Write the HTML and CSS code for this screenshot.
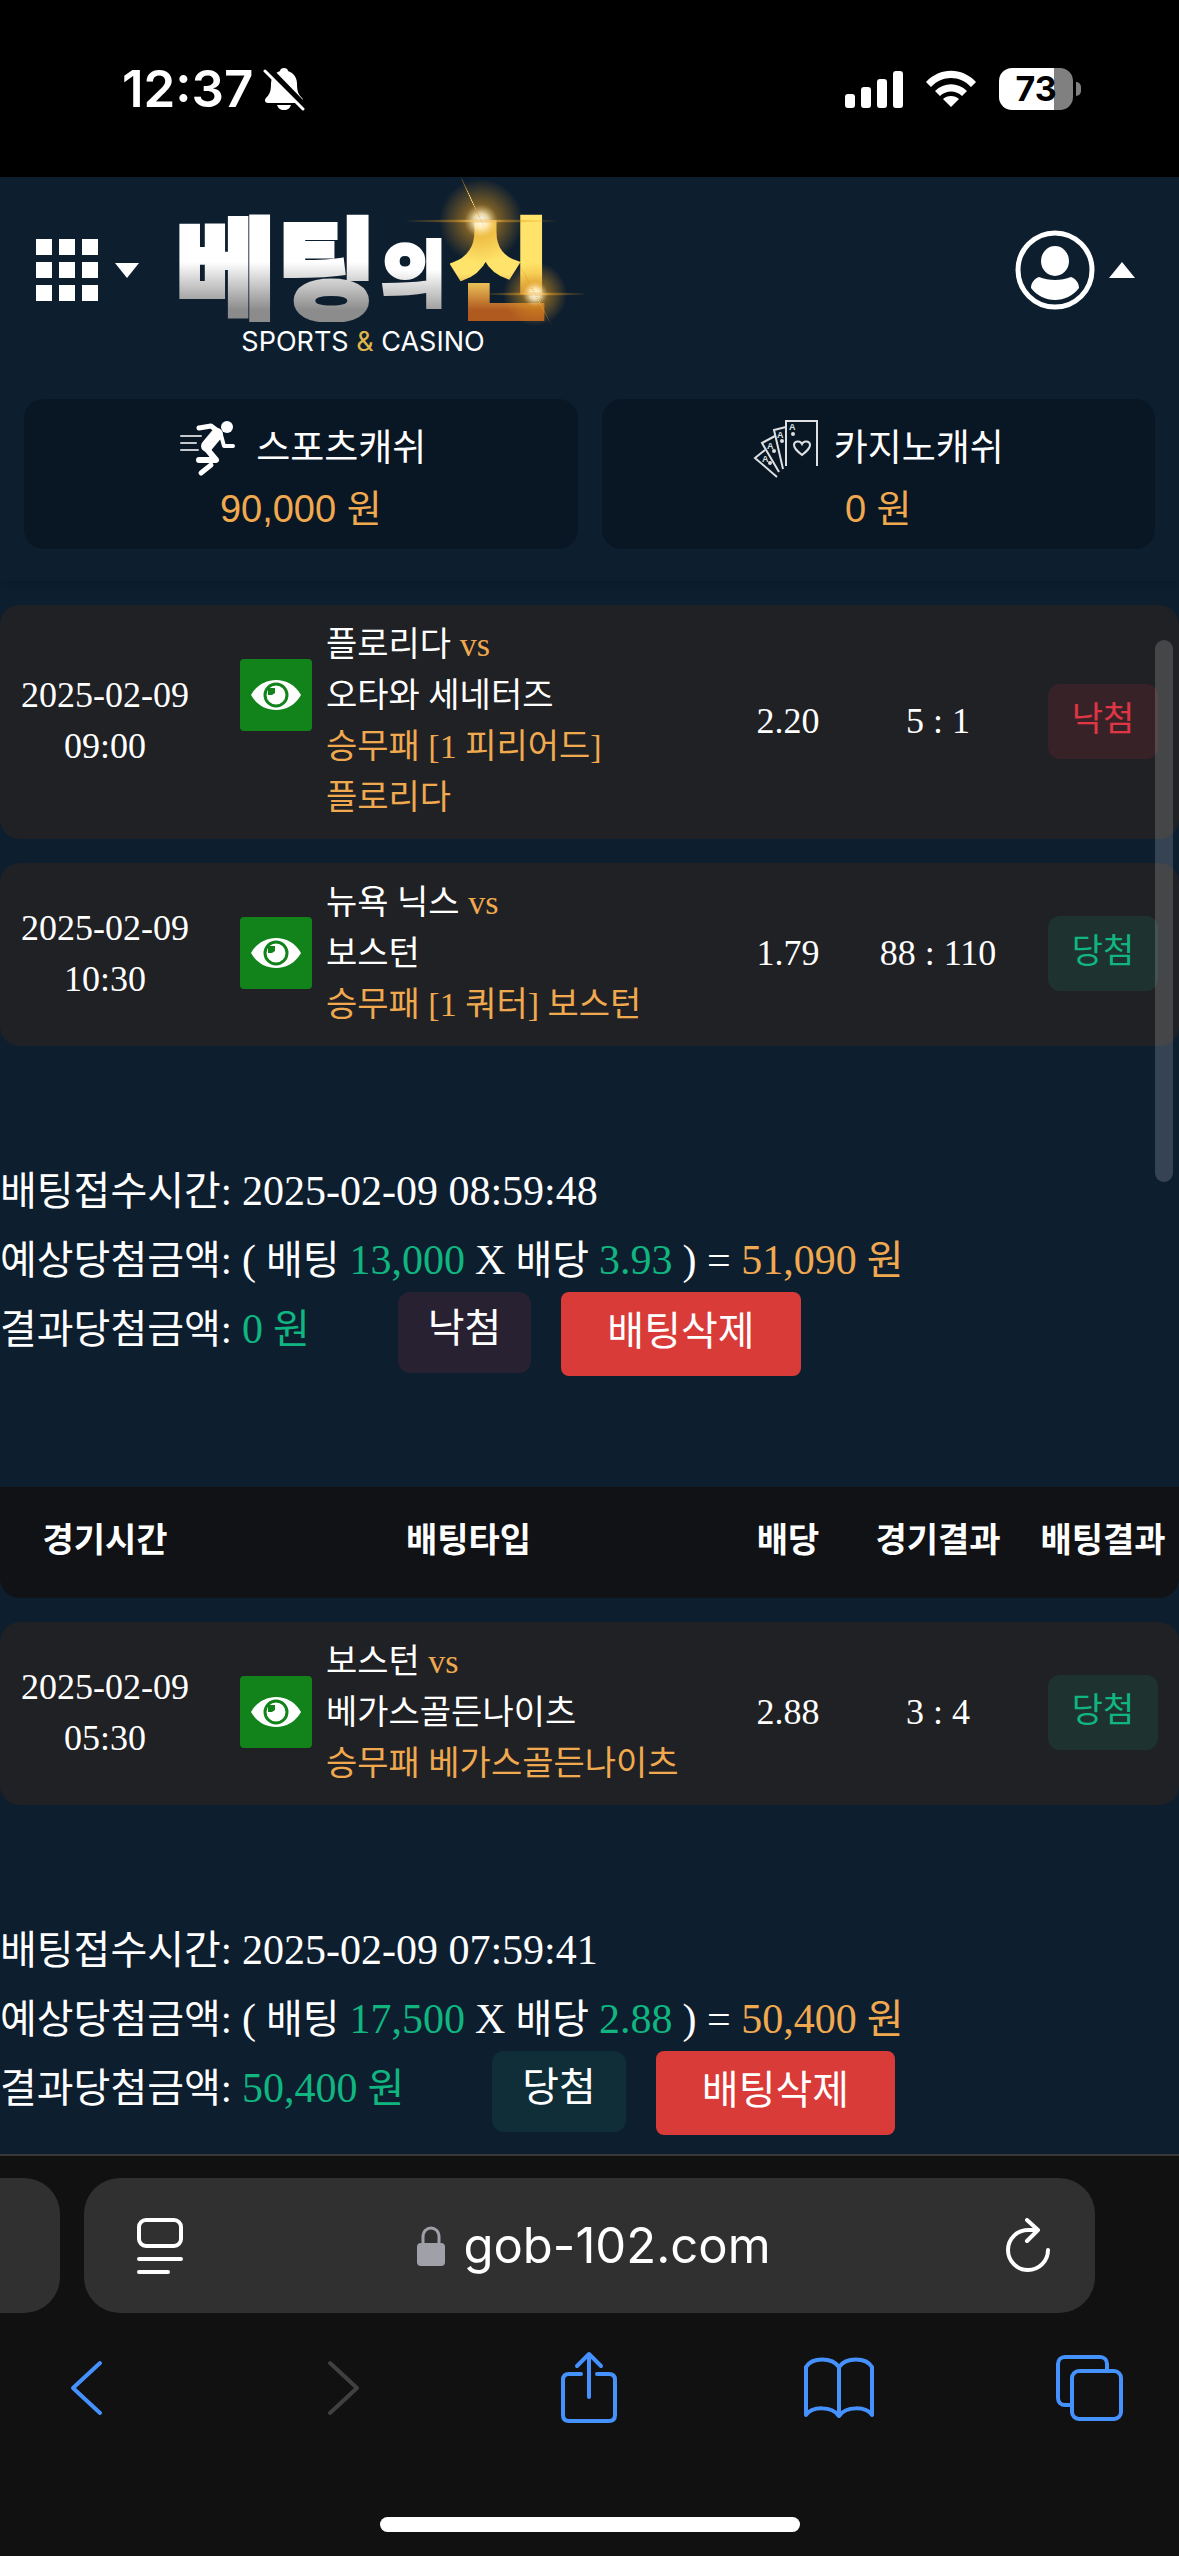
FILE: index.html
```html
<!DOCTYPE html>
<html lang="ko">
<head>
    <meta charset="UTF-8">
    <meta name="viewport" content="width=device-width, initial-scale=1.0">
    <title>베팅의신</title>
    <link rel="stylesheet" href="styles.css">
</head>
<body>
    <div class="status-bar">
        <div class="status-left">
            <span class="clock">12:37</span>
            <svg width="42" height="44" viewBox="0 0 42 44">
                <path d="M21 1c2 0 4 1 4 3 6 2 9 7 9 13 0 8 2 11 5 14 2 2 1 5-2 5H5c-3 0-4-3-2-5 3-3 5-6 5-14C8 11 11 6 17 4c0-2 2-3 4-3z" fill="#fff"/>
                <path d="M14 38h14c-1 3-3 5-7 5s-6-2-7-5z" fill="#fff"/>
                <path d="M4 1l39 40" stroke="#000" stroke-width="7"/>
                <path d="M2 4l38 38" stroke="#fff" stroke-width="3" stroke-linecap="round"/>
            </svg>
        </div>
        <div class="status-right">
            <svg width="58" height="38" viewBox="0 0 58 38" fill="#fff">
                <rect x="0" y="24" width="10" height="14" rx="3"/>
                <rect x="16" y="17" width="10" height="21" rx="3"/>
                <rect x="32" y="9" width="10" height="29" rx="3"/>
                <rect x="48" y="1" width="10" height="37" rx="3"/>
            </svg>
            <svg width="52" height="38" viewBox="0 0 52 38" fill="#fff">
                <path d="M26 37l-8-8c4-4 12-4 16 0z"/>
                <path d="M10 21C19 12 33 12 42 21l-5 5c-6-6-16-6-22 0z"/>
                <path d="M1 12C15-3 37-3 51 12l-5 5C35 5 17 5 6 17z"/>
            </svg>
            <div class="battery">73</div>
        </div>
    </div>

    <header>
        <div class="top">
            <button class="icon-btn" aria-label="메뉴">
                <svg width="62" height="62" viewBox="0 0 62 62" fill="#fff">
                    <rect x="0" y="0" width="16" height="16"/><rect x="23" y="0" width="16" height="16"/><rect x="46" y="0" width="16" height="16"/>
                    <rect x="0" y="23" width="16" height="16"/><rect x="23" y="23" width="16" height="16"/><rect x="46" y="23" width="16" height="16"/>
                    <rect x="0" y="46" width="16" height="16"/><rect x="23" y="46" width="16" height="16"/><rect x="46" y="46" width="16" height="16"/>
                </svg>
                <svg width="24" height="15" viewBox="0 0 24 15"><path d="M0 0h24L12 15z" fill="#fff"/></svg>
            </button>
            <a class="logo" href="#">
                <span class="logo-name"><span class="silver">베팅</span><span class="silver small">의</span><span class="gold">신</span></span>
                <span class="tagline">SPORTS <b>&amp;</b> CASINO</span>
                <svg class="flare" width="220" height="160" viewBox="0 0 220 160">
                    <defs>
                        <radialGradient id="glow">
                            <stop offset="0" stop-color="#fff"/>
                            <stop offset="0.18" stop-color="#ffe9b0" stop-opacity="0.9"/>
                            <stop offset="0.4" stop-color="#e09a20" stop-opacity="0.5"/>
                            <stop offset="1" stop-color="#e09a20" stop-opacity="0"/>
                        </radialGradient>
                    </defs>
                    <circle cx="92" cy="42" r="42" fill="url(#glow)"/>
                    <ellipse cx="92" cy="42" rx="80" ry="2" fill="url(#glow)"/>
                    <ellipse cx="82" cy="20" rx="36" ry="1" fill="url(#glow)" transform="rotate(65 82 20)"/>
                    <circle cx="146" cy="115" r="32" fill="url(#glow)"/>
                    <ellipse cx="146" cy="115" rx="54" ry="2" fill="url(#glow)"/>
                    <ellipse cx="146" cy="115" rx="40" ry="1" fill="url(#glow)" transform="rotate(62 146 115)"/>
                </svg>
            </a>
            <button class="icon-btn user" aria-label="내 정보">
                <svg width="80" height="80" viewBox="0 0 80 80">
                    <circle cx="40" cy="40" r="37" fill="none" stroke="#fff" stroke-width="5"/>
                    <ellipse cx="40" cy="31" rx="14" ry="15" fill="#fff"/>
                    <path d="M24 47c10 4 22 4 32 0 5 2 8 6 8 11C52 74 28 74 16 58c0-5 3-9 8-11z" fill="#fff"/>
                </svg>
                <svg width="26" height="16" viewBox="0 0 26 16"><path d="M0 16h26L13 0z" fill="#fff"/></svg>
            </button>
        </div>
        <div class="cash">
            <div class="cash-card">
                <div class="cash-label">
                    <svg width="66" height="60" viewBox="0 0 66 60" fill="none" stroke="#fff" stroke-linecap="round" stroke-linejoin="round">
                        <circle cx="52" cy="8" r="6" fill="#fff" stroke="none"/>
                        <path d="M24 9l12-2 8 6" stroke-width="5"/>
                        <path d="M42 15L32 27" stroke-width="12"/>
                        <path d="M46 16l3 11h9" stroke-width="4"/>
                        <path d="M31 29l10 12H24" stroke-width="6"/>
                        <path d="M36 46L26 54" stroke-width="5"/>
                        <path d="M6 17h20M6 24h15M6 31h17" stroke="#c4c8cc" stroke-width="2"/>
                    </svg>
                    <span>스포츠캐쉬</span>
                </div>
                <div class="cash-amount">90,000 원</div>
            </div>
            <div class="cash-card">
                <div class="cash-label">
                    <svg width="66" height="60" viewBox="0 0 66 60" fill="none" stroke="#dde0e3" stroke-width="2">
                        <path d="M33 47V2h31v45"/>
                        <path d="M33 8l-12 3 9 39"/>
                        <path d="M22 17l-13 7 17 29"/>
                        <path d="M12 31L2 39l22 19"/>
                        <path d="M49 36c-6-5-8-7-8-10 0-4 6-5 8-1 2-4 8-3 8 1 0 3-2 5-8 10z"/>
                        <g fill="#dde0e3" stroke="none" class="ace">
                            <text x="36" y="11">A</text><circle cx="40" cy="15" r="2"/>
                            <text x="24" y="19">A</text><circle cx="29" cy="22" r="2"/>
                            <text x="14" y="30">A</text><circle cx="21" cy="32" r="2"/>
                            <text x="9" y="43">A</text><circle cx="17" cy="44" r="2"/>
                        </g>
                    </svg>
                    <span>카지노캐쉬</span>
                </div>
                <div class="cash-amount">0 원</div>
            </div>
        </div>
    </header>

    <main>
        <table class="bets">
            <colgroup><col class="c-time"><col class="c-type"><col class="c-odds"><col class="c-score"><col class="c-result"></colgroup>
            <tbody>
                <tr>
                    <td>2025-02-09<br>09:00</td>
                    <td>
                        <div class="match">
                            <button class="eye" aria-label="보기"><svg width="52" height="32" viewBox="0 0 52 32"><path d="M1 16C12-4 40-4 51 16 40 36 12 36 1 16z" fill="#fff"/><circle cx="26" cy="16" r="11" fill="none" stroke="#12831a" stroke-width="3"/><path d="M18 9h7v5l-3 2h-4z" fill="#12831a"/></svg></button>
                            <div>플로리다 <span class="pick">vs</span><br>오타와 세네터즈<br><span class="pick">승무패 [1 피리어드] 플로리다</span></div>
                        </div>
                    </td>
                    <td>2.20</td>
                    <td>5 : 1</td>
                    <td><span class="badge lose">낙첨</span></td>
                </tr>
                <tr>
                    <td>2025-02-09<br>10:30</td>
                    <td>
                        <div class="match">
                            <button class="eye" aria-label="보기"><svg width="52" height="32" viewBox="0 0 52 32"><path d="M1 16C12-4 40-4 51 16 40 36 12 36 1 16z" fill="#fff"/><circle cx="26" cy="16" r="11" fill="none" stroke="#12831a" stroke-width="3"/><path d="M18 9h7v5l-3 2h-4z" fill="#12831a"/></svg></button>
                            <div>뉴욕 닉스 <span class="pick">vs</span><br>보스턴<br><span class="pick">승무패 [1 쿼터] 보스턴</span></div>
                        </div>
                    </td>
                    <td>1.79</td>
                    <td>88 : 110</td>
                    <td><span class="badge win">당첨</span></td>
                </tr>
            </tbody>
        </table>

        <div class="summary">
            <div>배팅접수시간: <span class="num">2025-02-09 08:59:48</span></div>
            <div>예상당첨금액: <span class="num">(</span> 배팅 <span class="num green">13,000</span> <span class="num">X</span> 배당 <span class="num green">3.93</span> <span class="num">) = <span class="pick">51,090</span></span> <span class="pick">원</span></div>
            <div class="summary-result">
                <span>결과당첨금액: <span class="green"><span class="num">0</span> 원</span></span>
                <span class="tag tag-lose">낙첨</span>
                <button class="delete">배팅삭제</button>
            </div>
        </div>

        <table class="bets">
            <colgroup><col class="c-time"><col class="c-type"><col class="c-odds"><col class="c-score"><col class="c-result"></colgroup>
            <thead>
                <tr>
                    <th>경기시간</th>
                    <th>배팅타입</th>
                    <th>배당</th>
                    <th>경기결과</th>
                    <th>배팅결과</th>
                </tr>
            </thead>
            <tbody>
                <tr>
                    <td>2025-02-09<br>05:30</td>
                    <td>
                        <div class="match">
                            <button class="eye" aria-label="보기"><svg width="52" height="32" viewBox="0 0 52 32"><path d="M1 16C12-4 40-4 51 16 40 36 12 36 1 16z" fill="#fff"/><circle cx="26" cy="16" r="11" fill="none" stroke="#12831a" stroke-width="3"/><path d="M18 9h7v5l-3 2h-4z" fill="#12831a"/></svg></button>
                            <div>보스턴 <span class="pick">vs</span><br>베가스골든나이츠<br><span class="pick">승무패 베가스골든나이츠</span></div>
                        </div>
                    </td>
                    <td>2.88</td>
                    <td>3 : 4</td>
                    <td><span class="badge win">당첨</span></td>
                </tr>
            </tbody>
        </table>

        <div class="summary">
            <div>배팅접수시간: <span class="num">2025-02-09 07:59:41</span></div>
            <div>예상당첨금액: <span class="num">(</span> 배팅 <span class="num green">17,500</span> <span class="num">X</span> 배당 <span class="num green">2.88</span> <span class="num">) = <span class="pick">50,400</span></span> <span class="pick">원</span></div>
            <div class="summary-result">
                <span>결과당첨금액: <span class="green"><span class="num">50,400</span> 원</span></span>
                <span class="tag tag-win">당첨</span>
                <button class="delete">배팅삭제</button>
            </div>
        </div>

        <div class="scrollbar"></div>
    </main>

    <footer>
        <div class="tabs">
            <div class="tab-prev"></div>
            <div class="address">
                <button aria-label="페이지 메뉴">
                    <svg width="46" height="56" viewBox="0 0 46 56" fill="none" stroke="#fff" stroke-width="4" stroke-linecap="round">
                        <rect x="2" y="2" width="42" height="26" rx="7"/><path d="M2 41h42M2 54h29"/>
                    </svg>
                </button>
                <button class="url">
                    <svg width="28" height="40" viewBox="0 0 28 40">
                        <rect x="0" y="17" width="28" height="23" rx="4" fill="#a0a0a8"/>
                        <path d="M6 19V11c0-12 16-12 16 0v8" fill="none" stroke="#a0a0a8" stroke-width="3"/>
                    </svg>
                    <span>gob-102.com</span>
                </button>
                <button aria-label="새로고침">
                    <svg width="46" height="56" viewBox="0 0 46 56" fill="none" stroke="#fff" stroke-width="4" stroke-linecap="round" stroke-linejoin="round">
                        <path d="M43 32A20 20 0 1 1 23 12h9"/><path d="M22 2l11 10-11 11"/>
                    </svg>
                </button>
            </div>
        </div>
        <nav>
            <button aria-label="뒤로"><svg width="72" height="76" viewBox="0 0 72 76"><path d="M50 14L23 39l27 25"/></svg></button>
            <button aria-label="앞으로" class="off"><svg width="72" height="76" viewBox="0 0 72 76"><path d="M29 14l27 25-27 25"/></svg></button>
            <button aria-label="공유"><svg width="72" height="76" viewBox="0 0 72 76"><path d="M29 25H17c-4 0-6 2-6 6v35c0 4 2 6 6 6h40c4 0 6-2 6-6V31c0-4-2-6-6-6H45M37 48V5M25 17L37 5l12 12"/></svg></button>
            <button aria-label="책갈피"><svg width="72" height="76" viewBox="0 0 72 76"><path d="M37 18C30 8 10 8 4 18v48c6-9 26-9 33 1 7-10 27-10 33-1V18C64 8 44 8 37 18zM37 18v48"/></svg></button>
            <button aria-label="탭"><svg width="72" height="76" viewBox="0 0 72 76"><rect x="19" y="22" width="49" height="48" rx="7"/><path d="M19 56h-7c-4 0-7-3-7-7V15c0-4 3-7 7-7h35c4 0 7 3 7 7v7"/></svg></button>
        </nav>
        <div class="home-bar"></div>
    </footer>
</body>
</html>
```

FILE: styles.css
```css
* {
    box-sizing: border-box;
}
body {
    margin: 0;
    min-height: 100vh;
    display: flex;
    flex-direction: column;
    background-color: #0d1e2f;
    color: #fff;
    font-family: "Liberation Serif", "Noto Sans CJK KR", serif;
    word-break: keep-all;
}
button {
    background: none;
    border: 0;
    padding: 0;
    color: inherit;
    font-family: inherit;
}
svg {
    display: block;
    flex-shrink: 0;
}

/* status bar */
.status-bar {
    height: 177px;
    background: #000;
    display: flex;
    align-items: center;
    justify-content: space-between;
    padding: 0 106px 0 122px;
    font-family: Inter, sans-serif;
}
.status-left,
.status-right {
    display: flex;
    align-items: center;
}
.status-left {
    gap: 10px;
}
.status-right {
    gap: 22px;
}
.clock {
    font-size: 51px;
    font-weight: 600;
}
.battery {
    position: relative;
    width: 74px;
    height: 42px;
    line-height: 42px;
    border-radius: 13px;
    background: linear-gradient(to right, #fff 74%, #808080 74%);
    color: #000;
    font-size: 34px;
    font-weight: 700;
    text-align: center;
}
.battery::after {
    content: "";
    position: absolute;
    right: -8px;
    top: 14px;
    width: 5px;
    height: 14px;
    border-radius: 0 5px 5px 0;
    background: #808080;
}

/* header */
header {
    padding: 36px 24px 32px;
    box-shadow: 0 3px 6px rgba(0,0,0,0.12);
}
.top {
    display: flex;
    align-items: flex-start;
    min-height: 186px;
    padding: 0 20px 0 12px;
}
.icon-btn {
    height: 114px;
    display: flex;
    align-items: center;
    gap: 17px;
}
.user {
    margin-left: auto;
    gap: 14px;
}
.logo {
    position: relative;
    margin-left: 36px;
    display: flex;
    flex-direction: column;
    align-items: center;
    color: #fff;
    text-decoration: none;
}
.logo-name {
    display: flex;
    align-items: center;
    gap: 4px;
    height: 112px;
    padding-bottom: 14px;
    line-height: 120px;
    font-family: "Noto Sans CJK KR", sans-serif;
    font-size: 110px;
    font-weight: 900;
}
.silver {
    background: linear-gradient(#fff 50%, #8c8c8c 90%);
    -webkit-background-clip: text;
    background-clip: text;
    color: transparent;
    -webkit-text-stroke: 4px transparent;
}
.small {
    margin-top: 16px;
    font-size: 70px;
}
.gold {
    background: linear-gradient(#ffe36a 60%, #b05a20 90%);
    -webkit-background-clip: text;
    background-clip: text;
    color: transparent;
    -webkit-text-stroke: 4px transparent;
}
.tagline {
    font-family: Inter, sans-serif;
    font-size: 27px;
    line-height: 34px;
}
.tagline b {
    color: #e0b64c;
    font-weight: 400;
}
.flare {
    position: absolute;
    left: 214px;
    top: -34px;
    pointer-events: none;
}
.cash {
    display: flex;
    gap: 24px;
}
.cash-card {
    flex: 1;
    padding: 18px 0 12px;
    border-radius: 20px;
    background: #091624;
    text-align: center;
}
.cash-label {
    display: flex;
    align-items: center;
    justify-content: center;
    gap: 15px;
    font-size: 37px;
    line-height: 64px;
}
.cash-amount {
    color: #f0a94f;
    font-family: "Liberation Sans", "Noto Sans CJK KR", sans-serif;
    font-size: 38px;
    line-height: 56px;
}
.ace {
    font-family: "Liberation Sans", sans-serif;
    font-size: 9px;
    font-weight: 700;
}

/* bets */
main {
    position: relative;
    flex: 1;
}
.bets {
    width: 100%;
    table-layout: fixed;
    border-collapse: separate;
    border-spacing: 0 24px;
    font-size: 36px;
    line-height: 51px;
    text-align: center;
}
.c-time { width: 210px; }
.c-odds { width: 122px; }
.c-score { width: 178px; }
.c-result { width: 152px; }
.bets th {
    padding: 28px 0 32px;
    background: #111215;
    font-size: 34px;
    font-weight: 700;
}
.bets td {
    padding: 14px 0 16px;
    background: #202124;
}
.bets th:first-child {
    border-radius: 0 0 0 20px;
}
.bets th:last-child {
    border-radius: 0 0 20px 0;
}
.bets td:first-child {
    border-radius: 20px 0 0 20px;
}
.bets td:last-child {
    border-radius: 0 20px 20px 0;
}
.match {
    display: flex;
    align-items: flex-start;
    gap: 14px;
    padding: 0 10px 0 30px;
    font-size: 34px;
    text-align: left;
}
.eye {
    flex-shrink: 0;
    width: 72px;
    height: 72px;
    margin-top: 40px;
    display: flex;
    align-items: center;
    justify-content: center;
    border-radius: 4px;
    background: #12831a;
}
.pick {
    color: #f0a94f;
}
.green {
    color: #10b580;
}
.badge {
    display: inline-block;
    width: 110px;
    height: 75px;
    line-height: 71px;
    border-radius: 12px;
    font-size: 34px;
    vertical-align: middle;
}
.win {
    background: #1e322f;
    color: #10b580;
}
.lose {
    background: #372327;
    color: #e03545;
}

/* bet summary */
.summary {
    margin-top: 87px;
    font-size: 40px;
    line-height: 69px;
}
.summary + .bets {
    margin-top: 87px;
}
.num {
    font-size: 42px;
}
.summary-result {
    display: flex;
    align-items: flex-start;
}
.tag,
.delete {
    margin-top: -3px;
    border-radius: 12px;
}
.tag {
    margin-left: 88px;
    margin-right: 30px;
    padding: 2px 30px 10px;
}
.tag-lose {
    background: #282132;
}
.tag-win {
    background: #0f2e38;
}
.delete {
    height: 84px;
    padding: 0 46px 12px;
    border-radius: 8px;
    background: #d93b38;
    font-size: 40px;
}
.scrollbar {
    position: absolute;
    right: 6px;
    top: 59px;
    width: 18px;
    height: 542px;
    border-radius: 9px;
    background: rgba(255,255,255,0.17);
}

/* browser toolbar */
footer {
    border-top: 2px solid #38383a;
    background: #111;
    padding: 22px 0 24px;
}
.tabs {
    display: flex;
    gap: 24px;
    padding-right: 84px;
}
.tab-prev {
    width: 60px;
    border-radius: 0 36px 36px 0;
    background: #303030;
}
.address {
    flex: 1;
    height: 135px;
    display: flex;
    align-items: center;
    justify-content: space-between;
    padding: 0 44px 0 53px;
    border-radius: 36px;
    background: #303030;
}
.url {
    display: flex;
    align-items: center;
    gap: 18px;
    font-family: Inter, sans-serif;
    font-size: 49px;
}
nav {
    display: flex;
    justify-content: space-between;
    padding: 36px 54px 0 50px;
}
nav svg {
    fill: none;
    stroke: #4592ff;
    stroke-width: 4;
    stroke-linecap: round;
    stroke-linejoin: round;
}
nav .off svg {
    stroke: #404040;
}
.home-bar {
    width: 420px;
    height: 15px;
    margin: 92px auto 0;
    border-radius: 8px;
    background: #fff;
}
```
